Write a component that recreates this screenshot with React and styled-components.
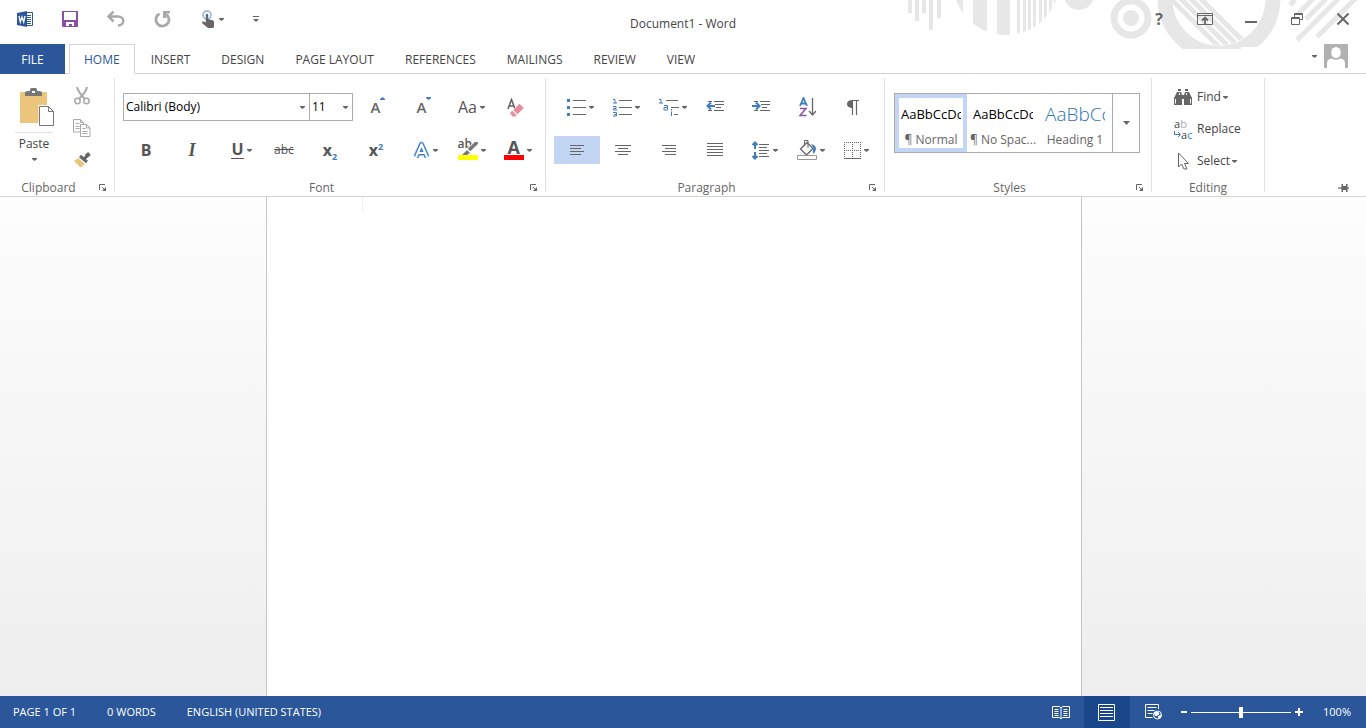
import React, { useState } from 'react';
import styled, { createGlobalStyle, css } from 'styled-components';

const GlobalStyle = createGlobalStyle`
  * {
    box-sizing: border-box;
  }

  body {
    margin: 0;
    background: #fff;
    color: #444;
    font-family: 'Open Sans', 'Noto Sans', sans-serif;
    font-size: 12px;
    line-height: 16px;
  }

  button, select, textarea, input {
    margin: 0;
    padding: 0;
    border: 0;
    background: none;
    color: inherit;
    font: inherit;
  }

  svg {
    display: block;
    flex: none;
  }
`;

const Window = styled.div`
  position: relative;
  display: flex;
  flex-direction: column;
  min-height: 100vh;
`;

const Decoration = styled.svg`
  position: absolute;
  top: 0;
  right: 0;
`;

const TitleBar = styled.header`
  position: relative;
  display: grid;
  grid-template-columns: 1fr auto 1fr;
  height: 44px;
`;

const QuickAccess = styled.div`
  display: flex;
  align-items: center;
  height: 38px;
  padding-left: 4px;
`;

const QuickButton = styled.button`
  display: flex;
  align-items: center;
  justify-content: center;
  gap: 4px;
  width: ${(props) => props.$width || 46}px;
  height: 28px;
`;

const Title = styled.h1`
  margin: 0;
  padding-top: 15px;
  font-size: 12px;
  font-weight: 400;
  line-height: 18px;
`;

const WindowControls = styled.div`
  display: flex;
  justify-content: flex-end;
  align-items: center;
  height: 38px;
`;

const TabBar = styled.nav`
  position: relative;
  display: flex;
  height: 30px;
  border-bottom: 1px solid #d4d4d4;
`;

const FileTab = styled.button`
  width: 65px;
  height: 30px;
  margin-right: 4px;
  padding-top: 2px;
  background: #2b579a;
  color: #fff;
`;

const Tab = styled.button`
  height: 30px;
  padding: 2px 15px 0 16px;
  ${(props) => props.$active && css`
    padding: 2px 14px 0;
    border: 1px solid #d4d4d4;
    border-bottom-color: #fff;
    background: #fff;
    color: #2b579a;
  `}
`;

const Account = styled.button`
  display: flex;
  align-items: center;
  gap: 7px;
  height: 24px;
  margin: 0 18px 0 auto;
`;

const Ribbon = styled.div`
  display: flex;
  height: 123px;
  border-bottom: 1px solid #d4d4d4;
`;

const Divider = styled.div`
  width: 1px;
  margin: 4px 0;
  background: #e1e1e1;
`;

const Group = styled.section`
  display: flex;
  flex-direction: column;
`;

const GroupBody = styled.div`
  flex: 1;
  padding: 19px ${(props) => props.$right || 8}px 0 ${(props) => props.$left || 8}px;
`;

const GroupFooter = styled.footer`
  display: flex;
  align-items: center;
  height: 16px;
  color: #666;
`;

const GroupName = styled.span`
  flex: 1;
  line-height: 18px;
  text-align: center;
`;

const Launcher = styled.button`
  display: flex;
  justify-content: center;
  width: 17px;
  padding-right: 5px;
`;

const ToolRow = styled.div`
  display: flex;
  height: 28px;
  margin-bottom: 15px;
`;

const ToolButton = styled.button`
  display: flex;
  align-items: center;
  justify-content: center;
  gap: 3px;
  width: 46px;
  height: 28px;
  padding-left: ${(props) => (props.$menu ? 7 : 0)}px;
  background: ${(props) => (props.$active ? '#c2d5f2' : 'transparent')};
`;

const ClipboardBody = styled.div`
  display: flex;
  flex: 1;
  padding: 6px 9px 0 11px;
`;

const PasteButton = styled.button`
  display: flex;
  flex-direction: column;
  align-items: center;
  width: 46px;
  padding-top: 8px;
`;

const PasteIcon = styled.span`
  padding-left: 6px;
`;

const PasteLabel = styled.span`
  width: 38px;
  margin: 6px 0;
  padding-top: 3px;
  border-top: 1px solid #e1e1e1;
`;

const SmallColumn = styled.div`
  display: flex;
  flex-direction: column;
  padding-left: 2px;
`;

const ClipButton = styled(QuickButton)`
  height: 32px;
`;

const EditingBody = styled.div`
  flex: 1;
  width: 112px;
  padding: 7px 0 0 22px;
`;

const EditButton = styled.button`
  display: flex;
  align-items: center;
  gap: 5px;
  height: 32px;
`;

const EditText = styled.span`
  display: flex;
  align-items: center;
  gap: 2px;
`;

const Combo = styled.label`
  display: flex;
  align-items: center;
  width: ${(props) => props.$width}px;
  height: 28px;
  padding-right: 4px;
  border: 1px solid #ababab;
  color: #000;

  & + & {
    border-left: 0;
  }
`;

const ComboSelect = styled.select`
  flex: 1;
  min-width: 0;
  padding-left: 2px;
  appearance: none;
`;

const Gallery = styled.div`
  display: flex;
  height: 60px;
  border: 1px solid #ababab;
`;

const StyleCard = styled.button`
  display: flex;
  flex-direction: column;
  align-items: center;
  width: 72px;
  padding-top: 4px;
  border: 4px solid ${(props) => (props.$active ? '#c2d5f2' : 'transparent')};
  white-space: nowrap;
`;

const Sample = styled.span`
  width: 60px;
  overflow: hidden;
  color: ${(props) => (props.$heading ? '#2e74b5' : '#000')};
  font-size: ${(props) => (props.$heading ? 19 : 13)}px;
  font-weight: ${(props) => (props.$heading ? 300 : 400)};
  line-height: 24px;
  text-align: left;
`;

const SampleName = styled.span`
  padding-top: 6px;
  color: #666;
`;

const GalleryMore = styled.button`
  display: flex;
  align-items: center;
  justify-content: center;
  width: 27px;
  margin-left: 1px;
  border-left: 1px solid #ababab;
`;

const PinButton = styled.button`
  align-self: flex-end;
  margin: 0 17px 4px auto;
`;

const Workspace = styled.main`
  display: flex;
  flex: 1;
  justify-content: center;
  padding-right: 18px;
  background: linear-gradient(#fdfdfd, #eee);
`;

const Page = styled.textarea`
  width: 816px;
  padding: 0 95px;
  border: 1px solid #c6c6c6;
  border-width: 0 1px;
  background: linear-gradient(#f0f0f0, #f0f0f0) 95px 0 / 1px 14px no-repeat #fff;
  outline: 0;
  resize: none;
`;

const StatusBar = styled.footer`
  display: flex;
  align-items: center;
  height: 32px;
  padding: 0 15px 0 13px;
  background: #2b579a;
  color: #fff;
  font-size: 11px;
`;

const StatusItem = styled.span`
  margin-right: 31px;
`;

const ViewButton = styled.button`
  display: flex;
  align-items: center;
  justify-content: center;
  width: 46px;
  height: 32px;
  background: ${(props) => (props.$active ? '#19478a' : 'transparent')};
`;

const Views = styled.div`
  display: flex;
  margin-left: auto;
`;

const ZoomButton = styled.button`
  display: flex;
  align-items: center;
  justify-content: center;
  width: 15px;
  height: 32px;
`;

const ZoomSlider = styled.input`
  width: 100px;
  height: 12px;
  appearance: none;
  background: linear-gradient(#fff, #fff) center / 100% 1px no-repeat;

  &::-webkit-slider-thumb {
    appearance: none;
    width: 4px;
    height: 11px;
    background: #fff;
  }
`;

const ZoomValue = styled.output`
  width: 45px;
  text-align: right;
`;

const Caret = ({ color = '#666' }) => (
  <svg width="5" height="3" viewBox="0 0 5 3" fill={color}>
    <path d="M0 0h5v1L2.500 3 0 1z" />
  </svg>
);

const icons = {
  word: (
    <svg width="17" height="16" viewBox="0 0 17 16">
      <path d="M9 1.500h6.500v13H9" fill="#fff" stroke="#2b579a" />
      <path d="M10 4.500h4M10 6.500h4M10 8.500h4M10 10.500h4M10 12.500h4" stroke="#2b579a" />
      <path d="M0 2l10-2v16L0 14z" fill="#2b579a" />
      <path d="M2 5l1.300 6L5 6l1.700 5L8 5" fill="none" stroke="#fff" strokeWidth="1.300" />
    </svg>
  ),
  save: (
    <svg width="16" height="16" viewBox="0 0 16 16">
      <path d="M0 0h16v16H1l-1-1z" fill="#8a50a8" />
      <path d="M2 1h12v8H2zM4 11h8v4h-2v-2H7v2H4z" fill="#fff" />
    </svg>
  ),
  undo: (
    <svg width="18" height="16" viewBox="0 0 18 16" fill="none" stroke="#a9a9a9">
      <path d="M2 5.500h9c7 0 7 9 0 9" strokeWidth="2.500" />
      <path d="M6.500 .5L1.500 5.500l5 5" strokeWidth="2.500" />
    </svg>
  ),
  redo: (
    <svg width="17" height="17" viewBox="0 0 17 17" fill="none" stroke="#a9a9a9">
      <path d="M5.500 2.800A6.500 6.500 0 1 0 12.500 3.500" strokeWidth="2.800" />
      <path d="M9 0h7v2.500h-3.500V7H9z" fill="#a9a9a9" stroke="none" />
    </svg>
  ),
  touch: (
    <svg width="14" height="18" viewBox="0 0 14 18">
      <circle cx="6" cy="5" r="4" fill="none" stroke="#9dc0e3" strokeWidth="1.800" />
      <path d="M4.800 4.500q1.200-1.500 2.400 0V9l5 1.500q1 .5.800 2V17l-1 1H7l-6-5q-.5-2 1.500-1.500l2.300 1z" fill="#666" />
    </svg>
  ),
  customize: (
    <svg width="6" height="7" viewBox="0 0 6 7" fill="#666">
      <path d="M0 0h6v1H0zM0 3h6L3 6z" />
    </svg>
  ),
  ribbonOptions: (
    <svg width="16" height="12" viewBox="0 0 16 12" fill="none" stroke="#666">
      <path d="M.5.500h15v11H.5zM.5 2.500h15" />
      <path d="M8 11V5M5 7.500L8 4.500l3 3" strokeWidth="1.800" />
    </svg>
  ),
  minimize: (
    <svg width="12" height="12" viewBox="0 0 12 12"><path d="M0 8h12v2H0z" fill="#666" /></svg>
  ),
  restore: (
    <svg width="12" height="12" viewBox="0 0 12 12" fill="none" stroke="#666">
      <path d="M3.500 4V.5h8v6H8.500M3.500 1.500h8M.5 4.500h8v7h-8zM.5 5.500h8" />
    </svg>
  ),
  close: (
    <svg width="12" height="12" viewBox="0 0 12 12" stroke="#666" strokeWidth="2">
      <path d="M.5.500l11 11M11.500.500l-11 11" />
    </svg>
  ),
  avatar: (
    <svg width="24" height="24" viewBox="0 0 24 24">
      <path d="M0 0h24v24H0z" fill="#b1b1b1" />
      <ellipse cx="12" cy="8.500" rx="4.800" ry="5.500" fill="#fff" />
      <path d="M3 24v-5q0-4 5-4.500 4 2.500 8 0 5 .5 5 4.500v5z" fill="#fff" />
    </svg>
  ),
  paste: (
    <svg width="34" height="38" viewBox="0 0 34 38">
      <path d="M0 4h27v31H0z" fill="#ecc57c" />
      <path d="M5 8V5q0-2 3-2h2V1.500Q10 0 11.500 0h4Q17 0 17 1.500V3h2q3 0 3 2v3z" fill="#777" />
      <path d="M12 3h3v2h-3z" fill="#fff" />
      <path d="M18.500 17h10l6 6v15h-16z" fill="#fff" />
      <path d="M19.500 18.500h9l5 5v14h-14zM28.500 18.500v5h5" fill="#fff" stroke="#777" />
    </svg>
  ),
  cut: (
    <svg width="16" height="18" viewBox="0 0 16 18" fill="none" stroke="#a9a9a9" strokeWidth="1.500">
      <path d="M3 0q1 5 8 12M13 0q-1 5-8 12" strokeWidth="2" />
      <circle cx="3.500" cy="14" r="2.700" />
      <circle cx="12.500" cy="14" r="2.700" />
    </svg>
  ),
  copy: (
    <svg width="18" height="18" viewBox="0 0 18 18" fill="#fff" stroke="#a9a9a9">
      <path d="M.5.500h7l3 3v9.500H.5zM7.500.500v3h3M2.500 4.500h4M2.500 7.500h4M2.500 9.500h4" />
      <path d="M7.500 5.500h6l3.500 3.500v8.500H7.500zM13.500 5.500V9H17M9.500 9.500h3M9.500 12.500h5M9.500 14.500h5" />
    </svg>
  ),
  brush: (
    <svg width="18" height="16" viewBox="0 0 18 16">
      <path d="M5 6l7 6-4.500 3.500L1 9z" fill="#ecc57c" />
      <path d="M7 4l7 6M11 7l2.500-2.500" stroke="#666" strokeWidth="3" />
      <path d="M13 4.500l3.500-3" stroke="#666" strokeWidth="4" />
    </svg>
  ),
  launcher: (
    <svg width="8" height="8" viewBox="0 0 8 8">
      <path d="M.5 6V.5H6M3 3l3 3" fill="none" stroke="#666" />
      <path d="M7 3v4H3z" fill="#666" />
    </svg>
  ),
  eraser: (
    <svg width="20" height="19" viewBox="-3 0 20 19">
      <path d="M1 11L4.500 1.500 8 11M2.500 8h4.500" fill="none" stroke="#666" strokeWidth="1.600" />
      <path d="M12.500 5.500L17 10l-6.500 6.500L6 12z" fill="#e88c9c" stroke="#fff" strokeWidth=".5" />
      <path d="M5.200 12.800l4.500 4.400-1.200 1.300H5.500L3.500 16v-1.500z" fill="#e88c9c" />
    </svg>
  ),
  effects: (
    <svg width="17" height="19" viewBox="0 0 17 19" fill="none" strokeLinejoin="round">
      <path d="M3 16L8.500 3.500l5.500 12.500M5.500 12h6" stroke="#b9d6f3" strokeWidth="6" />
      <path d="M3 16L8.500 3.500l5.500 12.500M5.500 12h6" stroke="#3f7cc0" strokeWidth="4.600" />
      <path d="M3 16L8.500 3.500l5.500 12.500M5.500 12h6" stroke="#fff" strokeWidth="2.200" />
    </svg>
  ),
  bullets: (
    <svg width="19" height="18" viewBox="0 0 19 18">
      <path d="M0 1h3v3H0zM0 8h3v3H0zM0 15h3v3H0z" fill="#3f7cc0" />
      <path d="M6 2.500h13M6 9.500h13M6 16.500h13" stroke="#666" />
    </svg>
  ),
  numbering: (
    <svg width="19" height="19" viewBox="0 0 19 19">
      <path d="M0 1.500h2V5M0 5h4M0 8.500h3v2H.5V12H4M0 14.500h3.500V18H0M1 16.500h2.500" fill="none" stroke="#3f7cc0" />
      <path d="M6 2.500h13M6 9.500h13M6 16.500h13" stroke="#666" />
    </svg>
  ),
  multilevel: (
    <svg width="20" height="19" viewBox="0 0 20 19">
      <path d="M0 1.500h2V5M0 5h4M5 7.500h3.500V12H5V9.500h3M12.500 13.500V18M12.500 11v1.500" fill="none" stroke="#3f7cc0" />
      <path d="M7 2.500h12M12 9.500h8M15 16.500h4" stroke="#666" />
    </svg>
  ),
  outdent: (
    <svg width="18" height="12" viewBox="0 0 18 12" fill="none">
      <path d="M2 .5h4M8 .5h10M9 3.500h9M10 6.500h5M8 9.500h10M2 9.500h4" stroke="#666" />
      <path d="M9 5H2M5 1.500L1.500 5 5 8.500" stroke="#3f7cc0" strokeWidth="2" />
    </svg>
  ),
  indent: (
    <svg width="18" height="12" viewBox="0 0 18 12" fill="none">
      <path d="M2 .5h4M8 .5h10M9 3.500h9M10 6.500h5M8 9.500h10M2 9.500h4" stroke="#666" />
      <path d="M0 5h7M4 1.500L7.500 5 4 8.500" stroke="#3f7cc0" strokeWidth="2" />
    </svg>
  ),
  sort: (
    <svg width="17" height="20" viewBox="0 0 17 20" fill="none">
      <path d="M1 9l3.500-8L8 9M2.500 6.500h4" stroke="#3f7cc0" strokeWidth="1.800" />
      <path d="M1 11.500h6L1 18.500h6.500" stroke="#8a50a8" strokeWidth="1.500" />
      <path d="M13.500 1v17M10 14l3.500 4 3.500-4" stroke="#666" strokeWidth="1.300" />
    </svg>
  ),
  pilcrow: (
    <svg width="12" height="15" viewBox="0 0 12 15">
      <path d="M12 .5H5v7" fill="none" stroke="#666" />
      <path d="M6 0v8Q0 8 0 4t6-4z" fill="#666" />
      <path d="M5.500 0v15M9.500 0v15" stroke="#666" strokeWidth="1.200" />
    </svg>
  ),
  left: (
    <svg width="14" height="11" viewBox="0 0 14 11"><path d="M0 .5h14M0 3.500h11M0 6.500h14M0 9.500h11" stroke="#666" /></svg>
  ),
  center: (
    <svg width="16" height="11" viewBox="0 0 16 11"><path d="M0 .5h16M3 3.500h10M0 6.500h16M3 9.500h10" stroke="#666" /></svg>
  ),
  right: (
    <svg width="14" height="11" viewBox="0 0 14 11"><path d="M0 .5h14M3 3.500h11M0 6.500h14M3 9.500h11" stroke="#666" /></svg>
  ),
  justify: (
    <svg width="16" height="14" viewBox="0 0 16 14"><path d="M0 .5h16M0 3.500h16M0 6.500h16M0 9.500h16M0 12.500h16" stroke="#666" /></svg>
  ),
  spacing: (
    <svg width="18" height="19" viewBox="0 0 18 19" fill="none">
      <path d="M3 1.500V8M3 11v6.500M.5 4L3 1.500 5.500 4M.5 15L3 17.500 5.500 15" stroke="#3f7cc0" strokeWidth="2" />
      <path d="M7 3.500h10M7 6.500h8M7 9.500h10M7 12.500h8M7 15.500h10" stroke="#666" />
    </svg>
  ),
  shading: (
    <svg width="20" height="20" viewBox="0 0 20 20" fill="none" stroke="#666">
      <path d="M3.500 9L10 2.500l6 6L9.500 15z" strokeWidth="1.300" />
      <path d="M7.500 6V.5h3.500V8" />
      <path d="M14 4q5 1 5 5-1 4-2.500 5-1.500-3 0-6z" fill="#3f7cc0" stroke="none" />
      <path d="M.5 15.500h19v4H.5z" fill="#fff" stroke="#999" />
    </svg>
  ),
  borders: (
    <svg width="17" height="17" viewBox="0 0 17 17" fill="none" stroke="#666">
      <path d="M0 .5h17M0 8.500h17M.5 0v16M8.500 0v16M16.500 0v16" strokeDasharray="1 1" />
      <path d="M0 16.500h17" />
    </svg>
  ),
  find: (
    <svg width="18" height="16" viewBox="0 0 18 16" fill="#666">
      <path d="M3 3h4l1 3v10H0V9zM11 3h4l3 6v7h-8V6zM4 0h3v2H4zM11 0h3v2h-3zM8 6h2v4H8z" />
      <path d="M1.500 10v4.500M16.500 10v4.500M5.500 4v2M12.500 4v2" stroke="#fff" />
    </svg>
  ),
  select: (
    <svg width="18" height="18" viewBox="0 0 18 18" fill="#fff" stroke="#666">
      <path d="M4.500 1v14l3-3 2.500 5h3l-2.500-5.500h4z" />
    </svg>
  ),
  pin: (
    <svg width="11" height="8" viewBox="0 0 11 8" fill="#666">
      <path d="M0 3.500h4v1.300H0zM3.500 0H5v2h3V0h1.500v3.500H11v1.300H9.500V8H8V6H5v2H3.500z" />
    </svg>
  ),
  read: (
    <svg width="18" height="15" viewBox="0 0 18 15" fill="none" stroke="#fff">
      <path d="M.5 1.500h7L9 3l1.500-1.500h7v11h-7L9 14l-1.500-1.500h-7zM9 3v11M2.500 4.500h4M2.500 6.500h4M2.500 8.500h4M2.500 10.500h4M11.500 4.500h4M11.500 6.500h4M11.500 8.500h4M11.500 10.500h4" />
    </svg>
  ),
  print: (
    <svg width="18" height="17" viewBox="0 0 18 17" fill="none" stroke="#fff">
      <path d="M.5.500h16v16H.5zM2 3.500h13M2 6.500h13M2 9.500h13M2 12.500h13" />
    </svg>
  ),
  web: (
    <svg width="17" height="16" viewBox="0 0 17 16" fill="none" stroke="#fff">
      <path d="M13.500 5V.5H.5v13h7M2.500 3.500h9M2.500 6.500h7M2.500 9.500h5" />
      <circle cx="12.500" cy="11" r="4" />
      <path d="M9 9l4-1 1 2-3 2zM13 13l3-2-1 3z" fill="#fff" />
    </svg>
  ),
};

const Glyph = styled.span`
  font-size: 16px;
  line-height: 20px;
  font-weight: ${(props) => (props.$regular ? 500 : 700)};
  color: #555;
  ${(props) => props.$italic && css`
    font-family: 'Liberation Serif', serif;
    font-size: 18px;
    font-style: italic;
  `}
  ${(props) => props.$underline && css`
    border-bottom: 1px solid #555;
    line-height: 17px;
  `}
  ${(props) => props.$small && css`
    font-size: 12px;
    font-weight: 400;
    text-decoration: line-through;
  `}

  sub, sup {
    color: #3f7cc0;
    font-size: 9px;
    line-height: 0;
  }
`;

const SizeGlyph = styled.span`
  display: flex;
  align-items: flex-start;
  padding-left: 4px;
  color: #666;
  font-size: 15px;
  font-weight: 600;
  line-height: 20px;
`;

const ColorGlyph = styled.span`
  position: relative;
  width: 20px;
  height: 20px;
  border-bottom: 5px solid ${(props) => props.$color};
  color: #555;
  font-size: ${(props) => props.$size}px;
  font-weight: ${(props) => props.$weight};
  line-height: ${(props) => props.$line}px;
  text-align: left;
  text-indent: ${(props) => props.$indent || 0}px;
`;

const Pen = styled.svg`
  position: absolute;
  top: 2px;
  left: 4px;
`;

const ReplaceIcon = styled.span`
  display: grid;
  gap: 1px;
  width: 18px;
  font-size: 11px;
  line-height: 10px;
  text-align: left;
`;

const ReplaceLine = styled.span`
  display: flex;
  align-items: center;

  i {
    color: ${(props) => props.$tint};
    font-style: normal;
  }
`;

const HelpMark = styled.span`
  color: #666;
  font-size: 16px;
  font-weight: 700;
`;

const Tool = ({ label, menu, active, children }) => (
  <ToolButton type="button" aria-label={label} $menu={menu} $active={active}>
    {children}
    {menu && <Caret />}
  </ToolButton>
);

const RibbonGroup = ({ name, launcher = true, children }) => (
  <>
    <Group>
      {children}
      <GroupFooter>
        <GroupName>{name}</GroupName>
        {launcher && <Launcher type="button" aria-label={`${name} settings`}>{icons.launcher}</Launcher>}
      </GroupFooter>
    </Group>
    <Divider />
  </>
);

const TopArt = () => (
  <Decoration width="476" height="50" viewBox="890 0 476 50" fill="#e7e7e7" aria-hidden="true">
    <defs>
      <clipPath id="striped"><circle cx="1006" cy="-18" r="53" /></clipPath>
      <clipPath id="inner"><circle cx="1219" cy="-2" r="47" /></clipPath>
      <clipPath id="cut"><path d="M1150 0h140v47h-49v2h-91z" /></clipPath>
    </defs>
    <path d="M908 0h4v13h-4zM915 0h4v21h-4zM922 0h4v13h-4zM929 0h4v30h-4zM937 0h4v18h-4z" />
    <path
      clipPath="url(#striped)"
      d="M950 0h13v50h-13zM973 0h14v50h-14zM997 0h13v50h-13zM1017 0h3v50h-3zM1023 0h3v50h-3zM1028 0h3v50h-3zM1033 0h3v50h-3zM1039 0h3v50h-3zM1044 0h3v50h-3zM1049 0h3v50h-3zM1054 0h3v50h-3z"
    />
    <circle cx="1079" cy="-5" r="15" />
    <circle cx="1131" cy="18" r="17" fill="none" stroke="#e7e7e7" strokeWidth="7" />
    <circle cx="1131" cy="18" r="8" />
    <circle cx="1219" cy="-1" r="54" fill="none" stroke="#e7e7e7" strokeWidth="15" clipPath="url(#cut)" />
    <path
      clipPath="url(#inner)"
      d="M1162 -10L1222 50M1172 -10L1232 50M1182 -10L1242 50M1192 -10L1252 50"
      stroke="#e7e7e7"
      strokeWidth="5"
    />
    <path d="M1290 5l5-5M1298 14l15-15M1306 19l20-20M1297 40l41-41M1317 37l39-39" stroke="#e7e7e7" strokeWidth="5" />
  </Decoration>
);

const tabs = ['HOME', 'INSERT', 'DESIGN', 'PAGE LAYOUT', 'REFERENCES', 'MAILINGS', 'REVIEW', 'VIEW'];

const App = () => {
  const [tab, setTab] = useState('HOME');
  const [zoom, setZoom] = useState(100);

  return (
    <Window>
      <GlobalStyle />
      <TopArt />
      <TitleBar>
        <QuickAccess>
          <QuickButton type="button" aria-label="Word" $width={43}>{icons.word}</QuickButton>
          <QuickButton type="button" aria-label="Save">{icons.save}</QuickButton>
          <QuickButton type="button" aria-label="Undo">{icons.undo}</QuickButton>
          <QuickButton type="button" aria-label="Redo">{icons.redo}</QuickButton>
          <QuickButton type="button" aria-label="Touch mode" $width={54}>{icons.touch}<Caret /></QuickButton>
          <QuickButton type="button" aria-label="Customize toolbar" $width={34}>{icons.customize}</QuickButton>
        </QuickAccess>
        <Title>Document1 - Word</Title>
        <WindowControls>
          <QuickButton type="button" aria-label="Help"><HelpMark>?</HelpMark></QuickButton>
          <QuickButton type="button" aria-label="Ribbon options">{icons.ribbonOptions}</QuickButton>
          <QuickButton type="button" aria-label="Minimize">{icons.minimize}</QuickButton>
          <QuickButton type="button" aria-label="Restore">{icons.restore}</QuickButton>
          <QuickButton type="button" aria-label="Close">{icons.close}</QuickButton>
        </WindowControls>
      </TitleBar>

      <TabBar>
        <FileTab type="button">FILE</FileTab>
        {tabs.map((name) => (
          <Tab key={name} type="button" $active={name === tab} onClick={() => setTab(name)}>{name}</Tab>
        ))}
        <Account type="button" aria-label="Account"><Caret />{icons.avatar}</Account>
      </TabBar>

      <Ribbon>
        <RibbonGroup name="Clipboard">
          <ClipboardBody>
            <PasteButton type="button">
              <PasteIcon>{icons.paste}</PasteIcon>
              <PasteLabel>Paste</PasteLabel>
              <Caret />
            </PasteButton>
            <SmallColumn>
              <ClipButton type="button" aria-label="Cut">{icons.cut}</ClipButton>
              <ClipButton type="button" aria-label="Copy">{icons.copy}</ClipButton>
              <ClipButton type="button" aria-label="Format painter">{icons.brush}</ClipButton>
            </SmallColumn>
          </ClipboardBody>
        </RibbonGroup>

        <RibbonGroup name="Font">
          <GroupBody>
            <ToolRow>
              <Combo $width={187}>
                <ComboSelect aria-label="Font"><option>Calibri (Body)</option></ComboSelect>
                <Caret />
              </Combo>
              <Combo $width={43}>
                <ComboSelect aria-label="Font size"><option>11</option></ComboSelect>
                <Caret />
              </Combo>
              <Tool label="Grow font">
                <SizeGlyph>A<svg width="5" height="3" viewBox="0 0 5 3" fill="#3f7cc0"><path d="M0 3V2L2.500 0 5 2v1z" /></svg></SizeGlyph>
              </Tool>
              <Tool label="Shrink font"><SizeGlyph>A<Caret color="#3f7cc0" /></SizeGlyph></Tool>
              <Tool label="Change case" menu><Glyph $regular>Aa</Glyph></Tool>
              <Tool label="Clear formatting">{icons.eraser}</Tool>
            </ToolRow>
            <ToolRow>
              <Tool label="Bold"><Glyph>B</Glyph></Tool>
              <Tool label="Italic"><Glyph $italic>I</Glyph></Tool>
              <Tool label="Underline" menu><Glyph $underline>U</Glyph></Tool>
              <Tool label="Strikethrough"><Glyph $small>abc</Glyph></Tool>
              <Tool label="Subscript"><Glyph>x<sub>2</sub></Glyph></Tool>
              <Tool label="Superscript"><Glyph>x<sup>2</sup></Glyph></Tool>
              <Tool label="Text effects" menu>{icons.effects}</Tool>
              <Tool label="Highlight" menu>
                <ColorGlyph $color="#ff0" $size={12} $weight={600} $line={8}>
                  ab
                  <Pen width="16" height="13" viewBox="0 0 16 13">
                    <path d="M15.500 0L7 8" stroke="#fff" strokeWidth="5" />
                    <path d="M15.500 0L7 8" stroke="#777" strokeWidth="3.500" />
                    <path d="M5 8l3 3-3 2H0z" fill="#777" />
                  </Pen>
                </ColorGlyph>
              </Tool>
              <Tool label="Font color" menu>
                <ColorGlyph $color="#f00" $size={18} $weight={700} $line={14} $indent={4}>A</ColorGlyph>
              </Tool>
            </ToolRow>
          </GroupBody>
        </RibbonGroup>

        <RibbonGroup name="Paragraph">
          <GroupBody>
            <ToolRow>
              <Tool label="Bullets" menu>{icons.bullets}</Tool>
              <Tool label="Numbering" menu>{icons.numbering}</Tool>
              <Tool label="Multilevel list" menu>{icons.multilevel}</Tool>
              <Tool label="Decrease indent">{icons.outdent}</Tool>
              <Tool label="Increase indent">{icons.indent}</Tool>
              <Tool label="Sort">{icons.sort}</Tool>
              <Tool label="Show marks">{icons.pilcrow}</Tool>
            </ToolRow>
            <ToolRow>
              <Tool label="Align left" active>{icons.left}</Tool>
              <Tool label="Center">{icons.center}</Tool>
              <Tool label="Align right">{icons.right}</Tool>
              <Tool label="Justify">{icons.justify}</Tool>
              <Tool label="Line spacing" menu>{icons.spacing}</Tool>
              <Tool label="Shading" menu>{icons.shading}</Tool>
              <Tool label="Borders" menu>{icons.borders}</Tool>
            </ToolRow>
          </GroupBody>
        </RibbonGroup>

        <RibbonGroup name="Styles">
          <GroupBody $left={9} $right={11}>
            <Gallery>
              <StyleCard type="button" $active><Sample>AaBbCcDc</Sample><SampleName>¶ Normal</SampleName></StyleCard>
              <StyleCard type="button"><Sample>AaBbCcDc</Sample><SampleName>¶ No Spac...</SampleName></StyleCard>
              <StyleCard type="button"><Sample $heading>AaBbCc</Sample><SampleName>Heading 1</SampleName></StyleCard>
              <GalleryMore type="button" aria-label="More styles">
                <svg width="7" height="4" viewBox="0 0 7 4" fill="#666"><path d="M0 0h7L3.500 4z" /></svg>
              </GalleryMore>
            </Gallery>
          </GroupBody>
        </RibbonGroup>

        <RibbonGroup name="Editing" launcher={false}>
          <EditingBody>
            <EditButton type="button">{icons.find}<EditText>Find<Caret /></EditText></EditButton>
            <EditButton type="button">
              <ReplaceIcon aria-hidden="true">
                <ReplaceLine $tint="#aaa">a<i>b</i></ReplaceLine>
                <ReplaceLine $tint="#3f7cc0">
                  <svg width="7" height="7" viewBox="0 0 7 7" fill="none" stroke="#3f7cc0"><path d="M.5 0v3.500H6M4 1l2.500 2.500L4 6" /></svg>
                  a<i>c</i>
                </ReplaceLine>
              </ReplaceIcon>
              <EditText>Replace</EditText>
            </EditButton>
            <EditButton type="button">{icons.select}<EditText>Select<Caret /></EditText></EditButton>
          </EditingBody>
        </RibbonGroup>
        <PinButton type="button" aria-label="Pin the ribbon">{icons.pin}</PinButton>
      </Ribbon>

      <Workspace>
        <Page aria-label="Document" />
      </Workspace>

      <StatusBar>
        <StatusItem>PAGE 1 OF 1</StatusItem>
        <StatusItem>0 WORDS</StatusItem>
        <StatusItem>ENGLISH (UNITED STATES)</StatusItem>
        <Views>
          <ViewButton type="button" aria-label="Read mode">{icons.read}</ViewButton>
          <ViewButton type="button" aria-label="Print layout" $active>{icons.print}</ViewButton>
          <ViewButton type="button" aria-label="Web layout">{icons.web}</ViewButton>
        </Views>
        <ZoomButton type="button" aria-label="Zoom out">
          <svg width="6" height="2"><path d="M0 0h6v2H0z" fill="#fff" /></svg>
        </ZoomButton>
        <ZoomSlider
          type="range"
          aria-label="Zoom"
          min="0"
          max="200"
          value={zoom}
          onChange={(e) => setZoom(Number(e.target.value))}
        />
        <ZoomButton type="button" aria-label="Zoom in">
          <svg width="8" height="8"><path d="M0 3h8v2H0zM3 0h2v8H3z" fill="#fff" /></svg>
        </ZoomButton>
        <ZoomValue>{zoom}%</ZoomValue>
      </StatusBar>
    </Window>
  );
};

export default App;
